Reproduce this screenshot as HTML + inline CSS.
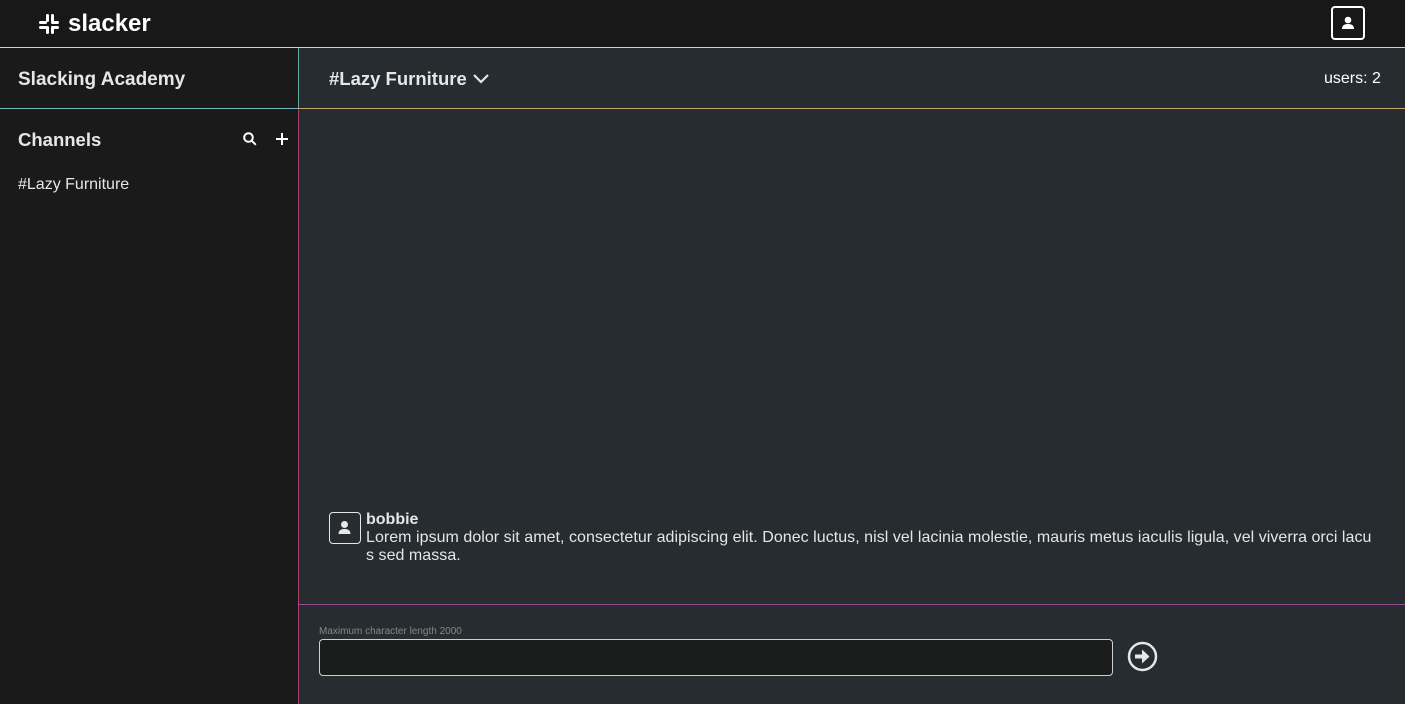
<!DOCTYPE html>
<html><head><style>
*{box-sizing:border-box;margin:0;padding:0}
body{width:1405px;height:704px;overflow:hidden;background:#262c2f;font-family:"Liberation Sans",Arial,sans-serif;color:#e6e6e6;position:relative}
.top{position:absolute;left:0;top:0;width:1405px;height:48px;background:#181818;border-bottom:1px solid #cfcfcf}
.logo{position:absolute;left:38px;top:10px;font-size:24px;font-weight:bold;color:#fff;display:flex;align-items:center;gap:8px}
.usr{position:absolute;left:1331px;top:6px;width:34px;height:34px;border:2px solid #fff;border-radius:4px}
.side{position:absolute;left:0;top:48px;width:299px;height:656px;background:#1a1a1a}
.sh{position:absolute;left:0;top:48px;width:299px;height:61px;border-bottom:1px solid #3ccfd6;border-right:1px solid #2ec4a4}
.sline{position:absolute;left:298px;top:109px;width:1px;height:595px;background:#e0246e}
.mh{position:absolute;left:299px;top:48px;width:1106px;height:61px;border-bottom:1px solid #f0a020}
.t{position:absolute;white-space:nowrap}
.mline{position:absolute;left:299px;top:604px;width:1106px;height:1px;background:#c42bb8}
.inp{position:absolute;left:319px;top:639px;width:794px;height:37px;background:#1a1b1b;border:1px solid #cfcfcf;border-radius:4px}
</style></head><body>
<div class="top">
 <div class="logo"><svg width="22" height="22" viewBox="0 0 22 22" fill="#fff"><rect x="1" y="8" width="8" height="3" rx="1.5"/><rect x="8" y="1" width="3" height="8" rx="1.5"/><rect x="13" y="1" width="3" height="8" rx="1.5"/><rect x="13" y="8" width="8" height="3" rx="1.5"/><rect x="13" y="13" width="8" height="3" rx="1.5"/><rect x="13" y="13" width="3" height="8" rx="1.5"/><rect x="8" y="13" width="3" height="8" rx="1.5"/><rect x="1" y="13" width="8" height="3" rx="1.5"/></svg><span>slacker</span></div>
 <div class="usr"><svg width="30" height="30" viewBox="0 0 30 30" fill="#fff"><circle cx="15" cy="12" r="3.3"/><path d="M9 21c0-4 3-5 6-5s6 1 6 5z"/></svg></div>
</div>
<div class="side"></div>
<div class="sh"></div>
<div class="sline"></div>
<div class="t" style="left:18px;top:69px;font-size:19px;font-weight:bold">Slacking Academy</div>
<div class="t" style="left:18px;top:129px;font-size:18.5px;font-weight:bold">Channels</div>
<svg class="t" style="left:242px;top:131px" width="16" height="16" viewBox="0 0 16 16" fill="none" stroke="#fff" stroke-width="2"><circle cx="6.5" cy="6.5" r="4.3"/><path d="M9.8 9.8l4 4"/></svg>
<svg class="t" style="left:275px;top:132px" width="14" height="14" viewBox="0 0 14 14" stroke="#fff" stroke-width="2"><path d="M7 1v12M1 7h12"/></svg>
<div class="t" style="left:18px;top:176px;font-size:16px">#Lazy Furniture</div>
<div class="mh"></div>
<div class="t" style="left:329px;top:68px;font-size:18.5px;font-weight:bold">#Lazy Furniture</div>
<svg class="t" style="left:472px;top:71px" width="18" height="14" viewBox="0 0 18 14" fill="none" stroke="#e6e6e6" stroke-width="2.2"><path d="M2 4l7 7 7-7"/></svg>
<div class="t" style="left:1324px;top:70px;font-size:16px;color:#fff">users: 2</div>
<div class="t" style="left:329px;top:512px;width:32px;height:32px;border:1.5px solid #e6e6e6;border-radius:4px"><svg width="29" height="29" viewBox="0 0 29 29" fill="#e6e6e6"><circle cx="14.5" cy="11.5" r="3.5"/><path d="M8.5 21c0-4 3-5 6-5s6 1 6 5z"/></svg></div>
<div class="t" style="left:366px;top:511px;font-size:16px;font-weight:bold;line-height:18px">bobbie</div>
<div class="t" style="left:366px;top:529px;width:1012px;white-space:normal;font-size:16px;line-height:18px;word-break:break-all;letter-spacing:0.04px">Lorem ipsum dolor sit amet, consectetur adipiscing elit. Donec luctus, nisl vel lacinia molestie, mauris metus iaculis ligula, vel viverra orci lacus sed massa.</div>
<div class="mline"></div>
<div class="t" style="left:319px;top:626px;font-size:10px;color:#888">Maximum character length 2000</div>
<div class="inp"></div>
<svg class="t" style="left:1127px;top:641px" width="31" height="31" viewBox="0 0 31 31"><circle cx="15.5" cy="15.5" r="13.5" fill="none" stroke="#e6e6e6" stroke-width="2.5"/><path d="M8 13.5h7v-5l7.5 7-7.5 7v-5H8z" fill="#e6e6e6"/></svg>
</body></html>
